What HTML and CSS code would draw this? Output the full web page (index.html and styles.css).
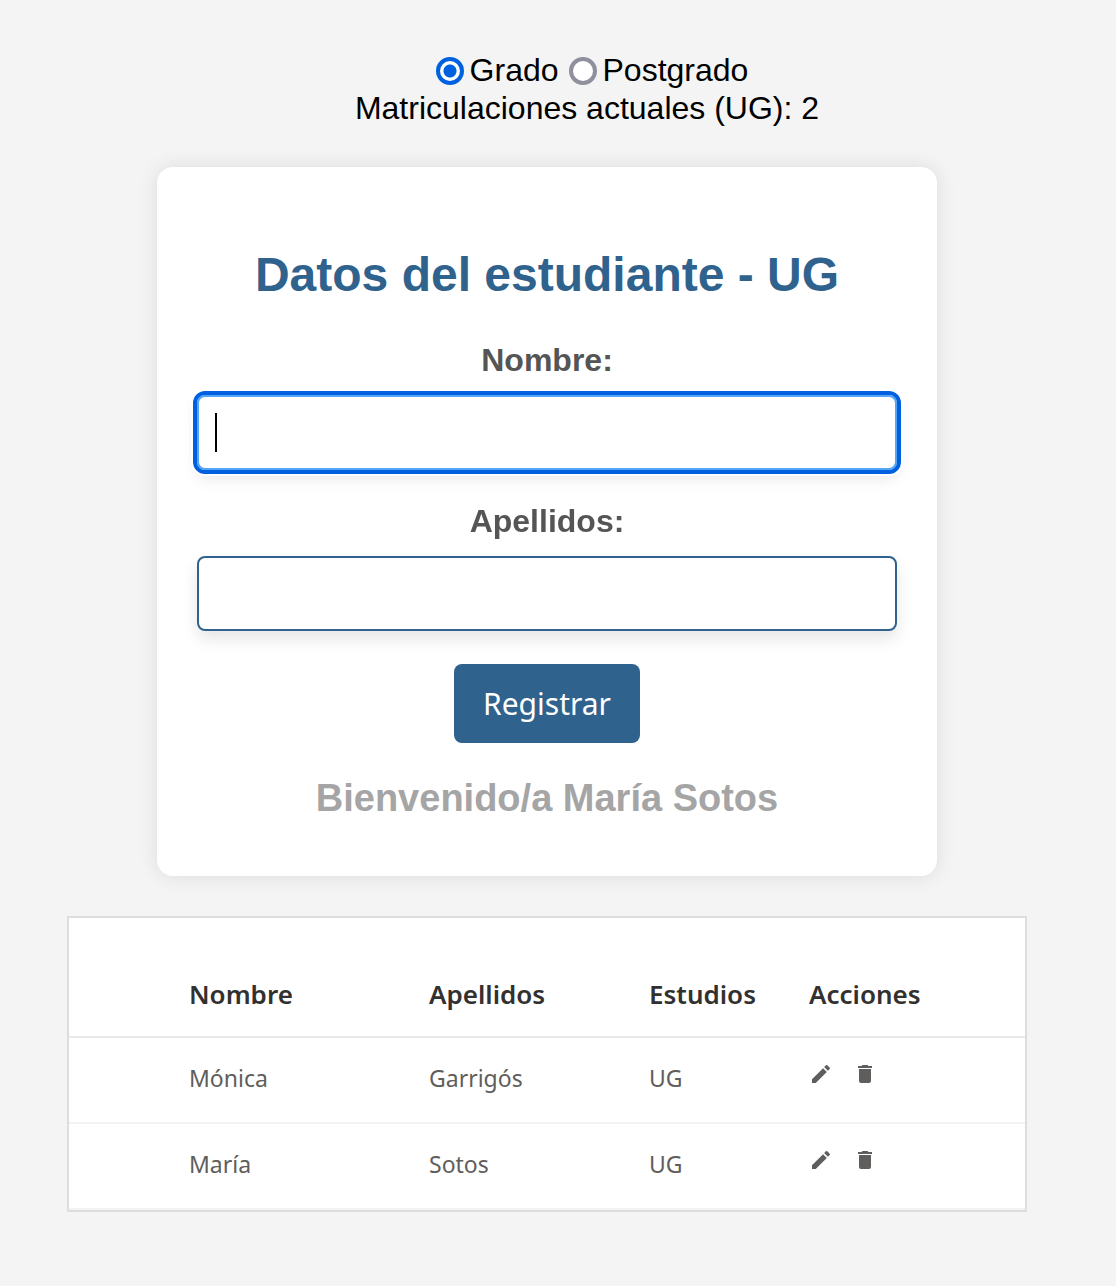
FILE: index.html
```html
<!DOCTYPE html>
<html lang="es">
<head>
<meta charset="utf-8">
<meta name="viewport" content="width=device-width, initial-scale=1">
<title>Matriculaciones</title>
<link rel="stylesheet" href="styles.css">
</head>
<body>
<main class="app">
  <header class="selector">
    <div class="options">
      <label class="option"><input class="radio" type="radio" name="nivel" checked>Grado</label>
      <label class="option"><input class="radio" type="radio" name="nivel">Postgrado</label>
    </div>
    <p class="count">Matriculaciones actuales (UG): 2</p>
  </header>

  <form class="card">
    <h1 class="title">Datos del estudiante - UG</h1>
    <div class="group">
      <label class="label" for="nombre">Nombre:</label>
      <input class="field" id="nombre" type="text" placeholder=" " autocomplete="off" autofocus>
    </div>
    <div class="group">
      <label class="label" for="apellidos">Apellidos:</label>
      <input class="field" id="apellidos" type="text" placeholder=" " autocomplete="off">
    </div>
    <button class="submit" type="button">Registrar</button>
    <p class="welcome">Bienvenido/a María Sotos</p>
  </form>

  <section class="list">
    <table class="table">
      <colgroup><col class="col-name"><col class="col-surname"><col class="col-level"><col></colgroup>
      <thead>
        <tr><th scope="col">Nombre</th><th scope="col">Apellidos</th><th scope="col">Estudios</th><th scope="col">Acciones</th></tr>
      </thead>
      <tbody>
        <tr>
          <td>Mónica</td><td>Garrigós</td><td>UG</td>
          <td><div class="actions">
            <button class="icon" type="button" aria-label="Editar"><svg viewBox="0 0 24 24"><path d="M3 17.25V21h3.75L17.81 9.94l-3.75-3.75L3 17.25zM20.71 7.04a1 1 0 0 0 0-1.41l-2.34-2.34a1 1 0 0 0-1.41 0l-1.83 1.83 3.75 3.75 1.83-1.83z"/></svg></button>
            <button class="icon" type="button" aria-label="Eliminar"><svg viewBox="0 0 24 24"><path d="M6 19a2 2 0 0 0 2 2h8a2 2 0 0 0 2-2V7H6v12zM19 4h-3.5l-1-1h-5l-1 1H5v2h14V4z"/></svg></button>
          </div></td>
        </tr>
        <tr>
          <td>María</td><td>Sotos</td><td>UG</td>
          <td><div class="actions">
            <button class="icon" type="button" aria-label="Editar"><svg viewBox="0 0 24 24"><path d="M3 17.25V21h3.75L17.81 9.94l-3.75-3.75L3 17.25zM20.71 7.04a1 1 0 0 0 0-1.41l-2.34-2.34a1 1 0 0 0-1.41 0l-1.83 1.83 3.75 3.75 1.83-1.83z"/></svg></button>
            <button class="icon" type="button" aria-label="Eliminar"><svg viewBox="0 0 24 24"><path d="M6 19a2 2 0 0 0 2 2h8a2 2 0 0 0 2-2V7H6v12zM19 4h-3.5l-1-1h-5l-1 1H5v2h14V4z"/></svg></button>
          </div></td>
        </tr>
      </tbody>
    </table>
  </section>
</main>
</body>
</html>
```
FILE: styles.css
```css
* { box-sizing: border-box; }

body {
  margin: 0;
  background: #f4f4f4;
  color: #000;
  font-family: "Liberation Sans", Arial, sans-serif;
  font-size: 32px;
}

.app {
  display: flex;
  flex-direction: column;
  align-items: center;
  gap: 40px;
  padding: 51px 89px 74px 67px;
}

.selector {
  padding-left: 80px;
  text-align: center;
  line-height: 38px;
}

.options {
  display: flex;
  justify-content: center;
}

.option {
  display: flex;
  align-items: center;
}

.radio {
  appearance: none;
  width: 28px;
  height: 28px;
  margin: 2px 6px 0 10px;
  border: 4px solid #8f8f9d;
  border-radius: 50%;
  background: #fff;
}

.radio:checked {
  border-color: #0061e0;
  background: radial-gradient(circle, #0061e0 6px, #fff 7px);
}

.count { margin: 0; }

.card {
  display: flex;
  flex-direction: column;
  align-items: center;
  width: 100%;
  max-width: 780px;
  padding: 80px 40px 56px;
  border-radius: 16px;
  background: #fff;
  box-shadow: 0 0 20px rgba(0, 0, 0, 0.1);
}

.title {
  margin: 0 0 38px;
  color: #30628e;
  font-size: 48px;
  line-height: 56px;
}

.group {
  display: flex;
  flex-direction: column;
  width: 100%;
  margin-bottom: 32px;
  text-align: center;
}

.label {
  margin-bottom: 16px;
  color: #555;
  font-weight: bold;
  line-height: 38px;
}

.field {
  width: 100%;
  height: 75px;
  padding: 16px;
  border: 2px solid #30628e;
  border-radius: 8px;
  background: #fff;
  font: 32px "Liberation Sans", Arial, sans-serif;
  box-shadow: 0 8px 16px rgba(0, 0, 0, 0.1);
}

.field:focus {
  border-color: #53a6f5;
  outline: 4px solid #0061e0;
  box-shadow: 0 0 0 6px #fff, 0 8px 16px rgba(0, 0, 0, 0.1);
}

/* Steady caret while the focused field is empty */
.field:focus:placeholder-shown {
  caret-color: transparent;
  background: linear-gradient(#000, #000) 16px center / 2px 39px no-repeat #fff;
}

.submit {
  margin-top: 1px;
  padding: 20px 29px;
  border: 0;
  border-radius: 8px;
  background: #30628e;
  color: #fff;
  font: 30px/39px "Noto Sans", sans-serif;
}

.welcome {
  margin: 33px 0 0;
  color: #a5a5a5;
  font-size: 38px;
  font-weight: bold;
  line-height: 44px;
}

.list {
  width: 100%;
  max-width: 960px;
  padding-top: 40px;
  border: 2px solid #ddd;
  background: #fff;
}

.table {
  width: 100%;
  border-collapse: separate;
  border-spacing: 0;
  table-layout: fixed;
  font-family: "Noto Sans", sans-serif;
}

.col-name { width: 360px; }
.col-surname { width: 220px; }
.col-level { width: 160px; }

th, td {
  padding: 0;
  text-align: left;
}

th:first-child, td:first-child { padding-left: 120px; }

th {
  height: 80px;
  padding-bottom: 6px;
  border-bottom: 2px solid #eaeaea;
  color: #323130;
  font-size: 26px;
  font-weight: 600;
}

td {
  height: 86px;
  padding-bottom: 4px;
  border-bottom: 2px solid #f3f2f1;
  color: #605e5c;
  font-size: 23px;
}

.actions {
  display: flex;
  gap: 20px;
  padding-bottom: 8px;
}

.icon {
  width: 24px;
  height: 24px;
  padding: 0;
  border: 0;
  background: none;
  color: #605e5c;
}

.icon svg {
  display: block;
  width: 24px;
  height: 24px;
  fill: currentColor;
}
```
